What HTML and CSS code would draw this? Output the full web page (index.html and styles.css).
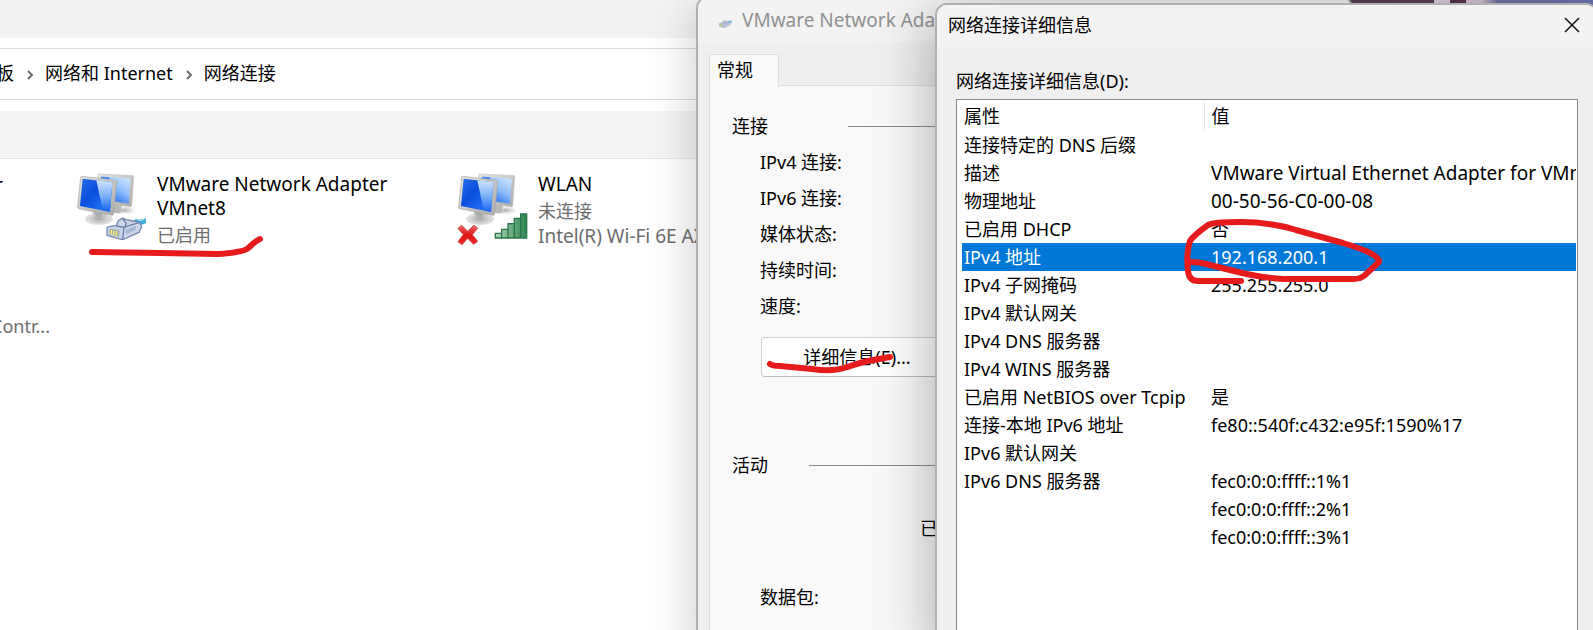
FILE: index.html
```html
<!DOCTYPE html>
<html lang="zh-CN">
<head>
<meta charset="utf-8">
<title>网络连接</title>
<link rel="stylesheet" href="styles.css">
</head>
<body>
<svg class="defs" aria-hidden="true">
  <defs>
    <linearGradient id="screen" x1="0" y1="0" x2="1" y2="1">
      <stop offset="0" stop-color="#2a6fe6"/><stop offset=".4" stop-color="#0a4fdc"/><stop offset="1" stop-color="#2b7dff"/>
    </linearGradient>
    <linearGradient id="glare" x1="0" y1="0" x2="0" y2="1">
      <stop offset="0" stop-color="#cfe4fd"/><stop offset=".5" stop-color="#7db2fa"/><stop offset="1" stop-color="#1463f2"/>
    </linearGradient>
    <linearGradient id="back" x1="1" y1="0" x2=".3" y2="1">
      <stop offset="0" stop-color="#d8ecff"/><stop offset=".5" stop-color="#8dbdfa"/><stop offset="1" stop-color="#1560ee"/>
    </linearGradient>
    <linearGradient id="frame" x1="0" y1="0" x2="1" y2="1">
      <stop offset="0" stop-color="#e6e6e3"/><stop offset="1" stop-color="#a9aaa8"/>
    </linearGradient>
    <radialGradient id="stand"><stop offset="0" stop-color="#a6a6a6"/><stop offset=".6" stop-color="#cfcfcf"/><stop offset="1" stop-color="#e4e4e4"/></radialGradient>
    <radialGradient id="shade"><stop offset="0" stop-color="#777" stop-opacity=".6"/><stop offset="1" stop-color="#999" stop-opacity="0"/></radialGradient>
    <linearGradient id="bars" x1="0" y1="0" x2="1" y2="0">
      <stop offset="0" stop-color="#a9d9b8"/><stop offset="1" stop-color="#2f8552"/>
    </linearGradient>
    <linearGradient id="cross" x1="0" y1="0" x2="0" y2="1">
      <stop offset="0" stop-color="#f36a6a"/><stop offset=".5" stop-color="#dc1414"/><stop offset="1" stop-color="#f02828"/>
    </linearGradient>
    <symbol id="monitors" viewBox="0 0 216 216">
      <ellipse cx="145" cy="115" rx="34" ry="13" fill="url(#shade)"/>
      <path d="M112 96l26 2-4 24q-14 4-26-2z" fill="#b9b9b9"/>
      <path d="M66 6L172 11Q174 12 173 15L167 101Q166 105 163 104L62 90z" fill="url(#frame)" stroke="#c2c2c0" stroke-width="2"/>
      <path d="M75 14L164 19 159 95 72 82z" fill="url(#back)"/>
      <path d="M75 14L100 15 96 50 72 60z" fill="#1768ee" opacity=".6"/>
      <ellipse cx="69" cy="141" rx="41" ry="17" fill="url(#stand)" stroke="#c8c8c8"/>
      <path d="M48 112L96 119 88 135Q68 144 53 133z" fill="#c6c6c6"/>
      <path d="M54 118L80 122 76 138 59 136z" fill="#9c9c9c" opacity=".6"/>
      <path d="M14 16Q14 13 18 13L117 25Q123 26 122 30L113 125Q112 130 108 130L8 110Q4 109 5 105z" fill="url(#frame)" stroke="#a6a6a4" stroke-width="2"/>
      <path d="M20 20L109 31 102 120 12 102z" fill="url(#screen)"/>
      <path d="M61 25L109 31 102 119 80 115z" fill="url(#glare)"/>
    </symbol>
    <symbol id="plug" viewBox="0 0 122 76">
      <path d="M90 8Q104 14 120 6L120 22 96 30 78 20z" fill="#3ab2dc"/>
      <path d="M92 10l14 4 14-8" stroke="#a7e7f7" stroke-width="3" fill="none"/>
      <path d="M3 36Q4 33 9 32L31 28 37 14 50 6 60 11 82 15 100 18 107 33 99 49 52 70 45 70 3 58z" fill="#cbd4e8" stroke="#7689b2" stroke-width="4" stroke-linejoin="round"/>
      <path d="M31 30L54 34 98 20M50 8L61 22 56 34M54 36L50 69" fill="none" stroke="#6b7eaa" stroke-width="4"/>
      <path d="M11 38L41 43 39 63 10 55z" fill="#a4afa5"/>
      <path d="M16 42v13M23 44v13M31 45v14" stroke="#f4ef6c" stroke-width="4"/>
      <path d="M60 43L91 29 88 41 61 55z" fill="#a6b5d4"/>
    </symbol>
  </defs>
</svg>

<main class="desktop">
  <section class="explorer" aria-label="网络连接">
    <div class="caption"></div>
    <nav class="crumbs">
      <a class="clip" href="#">板</a>
      <svg class="chev" viewBox="0 0 8 12"><path d="M2 2l4 4-4 4"/></svg>
      <a href="#">网络和 Internet</a>
      <svg class="chev" viewBox="0 0 8 12"><path d="M2 2l4 4-4 4"/></svg>
      <a href="#">网络连接</a>
    </nav>
    <div class="toolbar"></div>
    <div class="items">
      <div class="edge">
        <div class="edge-name"><span>r</span></div>
        <div class="edge-device"><span>Contr...</span></div>
      </div>
      <article class="item">
        <svg class="adapter" viewBox="0 0 216 216">
          <use href="#monitors" width="216" height="216"/>
          <use href="#plug" x="90" y="132" width="122" height="76"/>
        </svg>
        <div class="info">
          <div class="name">VMware Network Adapter VMnet8</div>
          <div class="state">已启用</div>
        </div>
      </article>
      <article class="item">
        <svg class="adapter" viewBox="0 0 216 216">
          <use href="#monitors" width="216" height="216"/>
          <path d="M115 184h19v14h-19zM134 172h19v26h-19zM153 155h19v43h-19zM172 139h19v59h-19zM191 126h18v72h-18z" fill="url(#bars)" stroke="#2d754a" stroke-width="4"/>
          <path d="M14 160L32 178 50 160 62 168 46 188 62 208 50 217 32 199 15 218 3 209 19 188 3 169z" fill="url(#cross)" stroke="#c94848" stroke-width="3"/>
        </svg>
        <div class="info">
          <div class="name">WLAN</div>
          <div class="state">未连接</div>
          <div class="state device">Intel(R) Wi-Fi 6E AX</div>
        </div>
      </article>
    </div>
  </section>

  <section class="window status" aria-label="VMware Network Adapter">
    <header class="status-title">
      <svg class="mini" viewBox="0 0 122 76"><use href="#plug"/></svg>
      <span>VMware Network Adapter</span>
    </header>
    <div class="tabs"><button class="tab" type="button">常规</button></div>
    <div class="page">
      <h2 class="group">连接</h2>
      <dl class="facts">
        <dt>IPv4 连接:</dt>
        <dt>IPv6 连接:</dt>
        <dt>媒体状态:</dt>
        <dt>持续时间:</dt>
        <dt>速度:</dt>
      </dl>
      <button class="more" type="button">详细信息(E)...</button>
      <h2 class="group activity">活动</h2>
      <div class="sent">已</div>
      <div class="packets">数据包:</div>
    </div>
  </section>

  <section class="window details" aria-label="网络连接详细信息">
    <header class="details-title">
      <span>网络连接详细信息</span>
      <button class="close" type="button" aria-label="关闭"><svg viewBox="0 0 16 16"><path d="M1 1l14 14M15 1L1 15"/></svg></button>
    </header>
    <div class="label" id="list-label">网络连接详细信息(D):</div>
    <div class="list">
      <table aria-labelledby="list-label">
        <thead><tr><th>属性</th><th>值</th></tr></thead>
        <tbody>
          <tr><td>连接特定的 DNS 后缀</td><td></td></tr>
          <tr><td>描述</td><td class="wide">VMware Virtual Ethernet Adapter for VMnet8</td></tr>
          <tr><td>物理地址</td><td class="wide">00-50-56-C0-00-08</td></tr>
          <tr><td>已启用 DHCP</td><td>否</td></tr>
          <tr class="selected"><td>IPv4 地址</td><td>192.168.200.1</td></tr>
          <tr><td>IPv4 子网掩码</td><td>255.255.255.0</td></tr>
          <tr><td>IPv4 默认网关</td><td></td></tr>
          <tr><td>IPv4 DNS 服务器</td><td></td></tr>
          <tr><td>IPv4 WINS 服务器</td><td></td></tr>
          <tr><td>已启用 NetBIOS over Tcpip</td><td>是</td></tr>
          <tr><td>连接-本地 IPv6 地址</td><td>fe80::540f:c432:e95f:1590%17</td></tr>
          <tr><td>IPv6 默认网关</td><td></td></tr>
          <tr><td>IPv6 DNS 服务器</td><td>fec0:0:0:ffff::1%1</td></tr>
          <tr><td></td><td>fec0:0:0:ffff::2%1</td></tr>
          <tr><td></td><td>fec0:0:0:ffff::3%1</td></tr>
        </tbody>
      </table>
    </div>
  </section>

  <svg class="marks" aria-hidden="true">
    <path d="M92 252L160 253L218 254C232 253 242 252 247 249C252 245 255 241 260 239"/>
    <path d="M770 364Q773 366 780 366L812 369Q832 372 844 368C854 365 858 363 868 361L890 357"/>
    <path d="M1241 281H1198Q1189 281 1188 271Q1186 252 1190 241Q1194 235 1208 225Q1214 222 1240 222C1262 222 1280 225 1296 230L1343 243Q1366 250 1372 254Q1379 258 1379 262L1365 275Q1361 279 1353 279H1283C1266 278 1245 274 1230 270L1202 263Q1196 262 1191 262"/>
  </svg>
</main>
</body>
</html>
```
FILE: styles.css
```css
* { box-sizing: border-box; }

body {
  margin: 0;
  font: 18px/24px "Noto Sans", "Noto Sans CJK SC", sans-serif;
  color: #000;
}

a { color: inherit; text-decoration: none; }
button { font: inherit; color: inherit; }
.defs { position: absolute; width: 0; height: 0; }

.desktop {
  position: relative;
  height: 100vh;
  overflow: hidden;
  background: linear-gradient(90deg, #5a4059 0 90%, #e0cfdc 90% 91%, #5a3350 91% 92%, #d9c4d4 92% 93%, #6b74aa 94%);
}

/* Explorer window */
.explorer {
  position: absolute;
  inset: 0 auto 0 0;
  width: 1000px;
  background: #fff;
}
.caption { height: 38px; background: #f3f3f3; }
.crumbs {
  display: flex;
  align-items: center;
  height: 52px;
  margin: 10px 0 11px;
  padding-bottom: 2px;
  border: solid #d9d9d9;
  border-width: 1px 0;
}
.clip { display: flex; justify-content: flex-end; width: 14px; overflow: hidden; }
.chev { width: 8px; height: 12px; margin: 3px 11px 0 12px; fill: none; stroke: #6b6b6b; stroke-width: 2; }
.toolbar { height: 48px; background: #f4f5f7; border-bottom: 1px solid #e3e6e9; }

.items {
  display: grid;
  grid-template-columns: 76px 381px 381px;
  padding-top: 13px;
}
.edge { color: #6d6d6d; }
.edge-name, .edge-device { display: flex; justify-content: flex-end; overflow: hidden; }
.edge-name { width: 3px; height: 24px; color: #000; }
.edge-device { width: 50px; margin-top: 118px; }
.item { display: flex; gap: 9px; }
.adapter { width: 72px; height: 72px; flex: none; overflow: visible; }
.name { max-width: 240px; font-size: 19px; }
.state { margin-top: 3px; color: #6d6d6d; }
.device { margin-top: 1px; font-size: 19px; white-space: nowrap; }

/* Dialog windows */
.window {
  position: absolute;
  background: #efefef;
  border: 2px solid #b0b0b0;
  border-radius: 12px 12px 0 0;
  box-shadow: 0 12px 60px rgba(0, 0, 0, .34);
}
.status { left: 696px; top: -4px; bottom: -20px; width: 657px; overflow: hidden; box-shadow: 0 12px 48px rgba(0, 0, 0, .22); }
.status-title {
  display: flex;
  align-items: center;
  gap: 10px;
  height: 44px;
  padding: 0 0 0 21px;
  background: #f3f3f3;
  color: #919191;
  font-size: 19px;
}
.mini { width: 13px; height: 10px; margin-top: 8px; }
.tabs { display: flex; height: 44px; padding: 12px 0 0 11px; }
.tab {
  width: 70px;
  height: 33px;
  padding: 0 0 2px 7px;
  text-align: left;
  background: #f9f9f9;
  border: 1px solid #dfdfdf;
  border-bottom: 0;
  z-index: 1;
}
.page {
  height: 100%;
  margin: -1px 11px 0;
  padding: 28px 0 0 22px;
  background: #f9f9f9;
  border: 1px solid #dfdfdf;
}
.group {
  display: flex;
  align-items: center;
  gap: 80px;
  margin: 0;
  font: inherit;
}
.group::after { content: ""; flex: 1; height: 1px; background: #8c8c8c; }
.facts { margin: 6px 0 13px 28px; line-height: 36px; }
.more {
  display: block;
  width: 192px;
  height: 40px;
  margin-left: 29px;
  background: #fff;
  border: 1px solid #cfcfcf;
  border-bottom-color: #bdbdbd;
  border-radius: 4px;
}
.activity { margin-top: 76px; gap: 41px; }
.sent { margin: 39px 0 0 188px; }
.packets { margin: 45px 0 0 28px; }

.details { left: 935px; right: -5px; top: 3px; bottom: -20px; display: flex; flex-direction: column; overflow: hidden; }
.details-title {
  display: flex;
  align-items: center;
  justify-content: space-between;
  height: 43px;
  flex: none;
  padding: 0 16px 3px 11px;
  background: #f3f3f3;
}
.close { display: flex; padding: 0; border: 0; background: none; }
.close svg { width: 16px; height: 16px; fill: none; stroke: #111; stroke-width: 1.5; }
.label { margin: 21px 0 6px 19px; }
.list {
  flex: 1;
  margin: 0 18px 0 19px;
  padding: 1px 1px 0 5px;
  background: #fff;
  border: 1px solid #828790;
  overflow: hidden;
}
table { width: 100%; table-layout: fixed; border-collapse: collapse; }
th, td { height: 28px; padding: 0 0 0 2px; text-align: left; font-weight: 400; white-space: nowrap; overflow: hidden; }
th { height: 30px; }
th:first-child { width: 242px; border-right: 1px solid #e5e5e5; }
th + th, td + td { padding-left: 7px; }
.wide { font-size: 19px; }
.selected { background: #0078d7; color: #fff; }

.marks {
  position: absolute;
  inset: 0;
  width: 100%;
  height: 100%;
  pointer-events: none;
  fill: none;
  stroke: #e61c1c;
  stroke-width: 6;
  stroke-linecap: round;
  stroke-linejoin: round;
}
```
